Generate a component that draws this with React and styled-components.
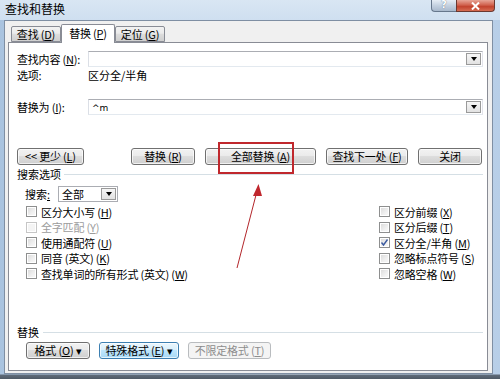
import React from 'react'
import styled, { createGlobalStyle } from 'styled-components'

const GlobalStyle = createGlobalStyle`
    * { box-sizing: border-box; }
    body {
        margin: 0;
        background: #ffffff;
    }
`;

const Check = ({ checked, disabled, children }) => (
    <CheckRow $disabled={disabled}>
        <Box $disabled={disabled}>
            {checked && (
                <svg width="9" height="9" viewBox="0 0 9 9">
                    <path d="M1.5 4.5 L3.5 7 L7.5 1.5" fill="none" stroke="#3c5ba0" strokeWidth="1.4" />
                </svg>
            )}
        </Box>
        <span>{children}</span>
    </CheckRow>
);

const Combo = ({ children }) => (
    <ComboBox>
        <ComboText>{children}</ComboText>
        <ArrowButton><Tri /></ArrowButton>
    </ComboBox>
);

export default function App() {
    return (
        <>
            <GlobalStyle />
            <Window>
                <TitleBar>
                    <Title>查找和替换</Title>
                    <Captions>
                        <HelpButton>?</HelpButton>
                        <CloseButton>
                            <svg width="11" height="8" viewBox="0 0 11 8">
                                <path d="M2 0.5 L9 7.5 M9 0.5 L2 7.5" stroke="#ffffff" strokeWidth="2" />
                            </svg>
                        </CloseButton>
                    </Captions>
                </TitleBar>
                <Frame>
                    <Dialog>
                        <TabStrip>
                            <Tab $w={50}>查找 (<u>D</u>)</Tab>
                            <Tab $w={54} $active>替换 (<u>P</u>)</Tab>
                            <Tab $w={50}>定位 (<u>G</u>)</Tab>
                        </TabStrip>
                        <Panel>
                            <FieldRow>
                                <Label>查找内容 (<u>N</u>):</Label>
                                <Combo />
                            </FieldRow>
                            <OptionRow>
                                <Label>选项:</Label>
                                <span>区分全/半角</span>
                            </OptionRow>
                            <FieldRow $top={18}>
                                <Label>替换为 (<u>I</u>):</Label>
                                <Combo><Small>^m</Small></Combo>
                            </FieldRow>
                            <ButtonRow>
                                <Button $w={67} $gapAfter={37}>&lt;&lt; 更少 (<u>L</u>)</Button>
                                <Button $w={64}>替换 (<u>R</u>)</Button>
                                <Button $w={111}>全部替换 (<u>A</u>)</Button>
                                <Button $w={82}>查找下一处 (<u>F</u>)</Button>
                                <Button $w={64}>关闭</Button>
                            </ButtonRow>
                            <SectionHeader>
                                <span>搜索选项</span>
                                <Rule />
                            </SectionHeader>
                            <SearchRow>
                                <SearchLabel>搜索<u>:</u></SearchLabel>
                                <Select>
                                    <ComboText>全部</ComboText>
                                    <ArrowButton><Tri /></ArrowButton>
                                </Select>
                            </SearchRow>
                            <Checks>
                                <CheckColumn>
                                    <Check>区分大小写 (<u>H</u>)</Check>
                                    <Check disabled>全字匹配 (<u>Y</u>)</Check>
                                    <Check>使用通配符 (<u>U</u>)</Check>
                                    <Check>同音 (英文) (<u>K</u>)</Check>
                                    <Check>查找单词的所有形式 (英文) (<u>W</u>)</Check>
                                </CheckColumn>
                                <RightColumn>
                                    <Check>区分前缀 (<u>X</u>)</Check>
                                    <Check>区分后缀 (<u>T</u>)</Check>
                                    <Check checked>区分全/半角 (<u>M</u>)</Check>
                                    <Check>忽略标点符号 (<u>S</u>)</Check>
                                    <Check>忽略空格 (<u>W</u>)</Check>
                                </RightColumn>
                            </Checks>
                            <BottomGroup>
                                <SectionHeader $tight>
                                    <span>替换</span>
                                    <Rule />
                                </SectionHeader>
                                <BottomButtons>
                                    <Button $w={64}>格式 (<u>O</u>) ▾</Button>
                                    <Button $w={80} $hot>特殊格式 (<u>E</u>) ▾</Button>
                                    <Button $w={83} disabled>不限定格式 (<u>T</u>)</Button>
                                </BottomButtons>
                            </BottomGroup>
                        </Panel>
                    </Dialog>
                </Frame>
                <Highlight />
                <ArrowMark width="500" height="379" viewBox="0 0 500 379">
                    <line x1="237" y1="268" x2="256.5" y2="193" stroke="#b3262b" strokeWidth="1" />
                    <polygon points="258.5,184 253,196 262,196" fill="#c0272d" />
                </ArrowMark>
            </Window>
        </>
    );
}

const Window = styled.div`
    position: relative;
    width: 500px;
    height: 379px;
    overflow: hidden;
    display: flex;
    flex-direction: column;
    background:
        linear-gradient(180deg, transparent 0, transparent 374px, #5f6b79 375px, #4f5a66 379px),
        linear-gradient(90deg, #a9c3df 0%, #c6d9ed 30%, #d4e3f2 60%, #b7cee7 100%);
    font-family: "Noto Sans CJK SC", "Noto Sans", sans-serif;
    font-size: 11px;
    color: #000000;
`;

const TitleBar = styled.div`
    height: 20px;
    display: flex;
    align-items: flex-start;
    padding-left: 5px;
    background: linear-gradient(180deg, #d9e6f3 0%, #cfdff0 100%);
`;

const Title = styled.div`
    font-size: 12px;
    line-height: 17px;
`;

const Captions = styled.div`
    margin-left: auto;
    margin-right: 5px;
    display: flex;
`;

const HelpButton = styled.div`
    width: 25px;
    height: 12px;
    border: 1px solid #66778c;
    border-top: none;
    border-right: none;
    border-radius: 0 0 0 4px;
    background: linear-gradient(180deg, #e6edf5 0%, #c4d1e0 50%, #a9b9cd 100%);
    color: #ffffff;
    font-family: "DejaVu Sans", sans-serif;
    font-size: 10px;
    font-weight: bold;
    line-height: 10px;
    text-align: center;
    text-shadow: 0 0 1px #45566b;
`;

const CloseButton = styled.div`
    width: 39px;
    height: 12px;
    border: 1px solid #6b3830;
    border-top: none;
    border-radius: 0 0 4px 0;
    background: linear-gradient(180deg, #e7a597 0%, #d1634f 45%, #c2432e 60%, #d66c52 100%);
    display: flex;
    align-items: center;
    justify-content: center;
`;

const Frame = styled.div`
    flex: 1;
    display: flex;
    padding: 0 7px 5px 4px;
`;

const Dialog = styled.div`
    flex: 1;
    display: flex;
    flex-direction: column;
    background: #f0f0f0;
    border: 1px solid #7f8fa3;
    padding: 4px 4px 2px 3px;
`;

const TabStrip = styled.div`
    display: flex;
    align-items: flex-end;
    height: 18px;
    padding-left: 3px;
    position: relative;
    z-index: 1;
    margin-bottom: -1px;
`;

const Tab = styled.div`
    width: ${p => p.$w}px;
    height: ${p => (p.$active ? 19 : 16)}px;
    margin-bottom: ${p => (p.$active ? 0 : 1)}px;
    border: 1px solid #898c95;
    border-bottom: ${p => (p.$active ? 'none' : '1px solid #898c95')};
    border-radius: 2px 2px 0 0;
    background: ${p => (p.$active
        ? '#ffffff'
        : 'linear-gradient(180deg, #f2f2f2 0%, #ebebeb 45%, #dddddd 50%, #cfcfcf 100%)')};
    display: flex;
    align-items: center;
    justify-content: center;
    padding-bottom: ${p => (p.$active ? 2 : 0)}px;
    white-space: nowrap;
    letter-spacing: -0.2px;
`;

const Panel = styled.div`
    flex: 1;
    display: flex;
    flex-direction: column;
    background: #ffffff;
    border: 1px solid #898c95;
    padding: 8px 4px 11px 8px;
`;

const FieldRow = styled.div`
    display: flex;
    align-items: center;
    height: 16px;
    margin-top: ${p => p.$top || 0}px;
`;

const OptionRow = styled.div`
    display: flex;
    align-items: center;
    height: 13px;
    margin-top: 1px;
`;

const Label = styled.div`
    width: 71px;
    flex-shrink: 0;
    white-space: nowrap;
    letter-spacing: -0.2px;
`;

const ComboBox = styled.div`
    flex: 1;
    height: 16px;
    display: flex;
    align-items: center;
    border: 1px solid #abadb3;
    border-color: #abadb3 #e2e3ea #e3e9ef #dbdfe6;
    background: #ffffff;
    padding: 0 1px 0 3px;
`;

const ComboText = styled.div`
    flex: 1;
    line-height: 13px;
`;

const Small = styled.span`
    font-size: 9px;
    font-family: "DejaVu Sans", sans-serif;
`;

const ArrowButton = styled.div`
    width: 15px;
    height: 12px;
    border: 1px solid #9a9a9a;
    background: linear-gradient(180deg, #f6f6f6 0%, #e2e2e2 100%);
    display: flex;
    align-items: center;
    justify-content: center;
`;

const Tri = styled.div`
    width: 0;
    height: 0;
    border-left: 3.5px solid transparent;
    border-right: 3.5px solid transparent;
    border-top: 4px solid #000000;
`;

const ButtonRow = styled.div`
    display: flex;
    gap: 10px;
    margin-top: 33px;
    height: 17px;
`;

const Button = styled.div`
    width: ${p => p.$w}px;
    height: 17px;
    margin-right: ${p => p.$gapAfter || 0}px;
    flex-shrink: 0;
    border: 1px solid ${p => (p.disabled ? '#b9bcbf' : p.$hot ? '#3c7fb1' : '#707070')};
    border-radius: 3px;
    background: ${p => (p.disabled
        ? '#f4f4f4'
        : p.$hot
            ? 'linear-gradient(180deg, #eaf6fd 0%, #d9f0fc 45%, #bee6fd 50%, #a7d9f5 100%)'
            : 'linear-gradient(180deg, #f2f2f2 0%, #ebebeb 45%, #dddddd 50%, #cfcfcf 100%)')};
    color: ${p => (p.disabled ? '#8d8d8d' : '#000000')};
    box-shadow: inset 0 0 0 1px ${p => (p.disabled ? 'transparent' : 'rgba(255,255,255,0.7)')};
    display: flex;
    align-items: center;
    justify-content: center;
    white-space: nowrap;
    line-height: 13px;
    letter-spacing: -0.2px;
`;

const SectionHeader = styled.div`
    display: flex;
    align-items: center;
    gap: ${p => (p.$tight ? 4 : 3)}px;
    height: 14px;
    margin-top: ${p => (p.$tight ? 0 : 2)}px;
`;

const Rule = styled.div`
    flex: 1;
    height: 1px;
    background: #d5dfe5;
`;

const SearchRow = styled.div`
    display: flex;
    align-items: center;
    height: 16px;
    margin-top: 5px;
    padding-left: 8px;
`;

const SearchLabel = styled.div`
    width: 33px;
`;

const Select = styled(ComboBox)`
    flex: none;
    width: 60px;
    border-color: #abadb3;
`;

const Checks = styled.div`
    display: flex;
    margin-top: 2px;
    padding-left: 9px;
`;

const CheckColumn = styled.div`
    flex: 1;
    display: flex;
    flex-direction: column;
`;

const RightColumn = styled(CheckColumn)`
    flex: none;
    width: 104px;
`;

const CheckRow = styled.div`
    height: 15.5px;
    display: flex;
    align-items: center;
    gap: 4px;
    white-space: nowrap;
    letter-spacing: -0.2px;
    color: ${p => (p.$disabled ? '#9c9c9c' : '#000000')};
`;

const Box = styled.div`
    width: 11px;
    height: 11px;
    border: 1px solid ${p => (p.$disabled ? '#c6c6c6' : '#8e8f8f')};
    background: ${p => (p.$disabled
        ? '#f4f4f4'
        : 'linear-gradient(135deg, #d8d8d8 0%, #f0f0f0 60%, #fbfbfb 100%)')};
    box-shadow: inset 0 0 0 1px #ffffff;
    display: flex;
    align-items: center;
    justify-content: center;
`;

const BottomGroup = styled.div`
    margin-top: auto;
    display: flex;
    flex-direction: column;
`;

const BottomButtons = styled.div`
    display: flex;
    gap: 9px;
    margin-top: 3px;
    padding-left: 9px;
`;

const Highlight = styled.div`
    position: absolute;
    left: 218px;
    top: 142px;
    width: 76px;
    height: 32px;
    border: 2px solid #c0282d;
    pointer-events: none;
`;

const ArrowMark = styled.svg`
    position: absolute;
    left: 0;
    top: 0;
    pointer-events: none;
`;
